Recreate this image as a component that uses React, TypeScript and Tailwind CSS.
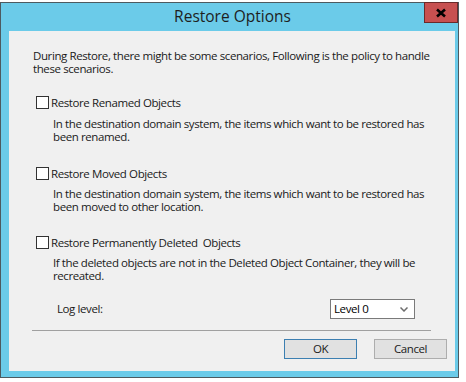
import React from "react";

function Check({ label }: { label: string }) {
  return (
    <div className="flex items-center h-[13px] ml-[27px]">
      <div className="w-[13px] h-[13px] border border-[#333333] bg-white shrink-0" />
      <span className="ml-[2px] leading-[13px] whitespace-pre">{label}</span>
    </div>
  );
}

function Desc({ l1, l2, mt }: { l1: string; l2: string; mt: string }) {
  return (
    <div className={`ml-[44px] leading-[13px] whitespace-nowrap ${mt}`}>
      {l1}
      <br />
      {l2}
    </div>
  );
}

export default function App() {
  return (
    <div
      className="w-[466px] h-[382px] bg-white overflow-hidden"
      style={{ fontFamily: '"Open Sans", "Noto Sans", sans-serif' }}
    >
      <div className="mt-[2px] w-[459px] h-[376px] bg-[#6bcbe9] border border-[#4d5a60] flex flex-col relative">
        <div className="h-[28px] flex items-center justify-center pl-[6px] text-[15.5px] text-[#1e1e1e]">
          Restore Options
        </div>
        <div className="absolute top-[-1px] right-0 w-[34px] h-[21px] bg-[#c75050] border border-[#6b2a2a] flex items-center justify-center">
          <svg width="12" height="10" viewBox="0 0 12 10">
            <path d="M2 1.5 L10 8.5 M10 1.5 L2 8.5" stroke="#000" strokeWidth="2.6" />
          </svg>
        </div>
        <div className="ml-[8px] mr-[3px] h-[340px] bg-[#f0f0f0] text-[11.5px] tracking-[-0.4px] text-[#1a1a1a] flex flex-col">
          <div className="ml-[24px] mt-[18px] leading-[13px] whitespace-nowrap">
            During Restore, there might be some scenarios, Following is the policy to handle
            <br />
            these scenarios.
          </div>
          <div className="mt-[21px]">
            <Check label="Restore Renamed Objects" />
          </div>
          <Desc
            mt="mt-[8px]"
            l1="In the destination domain system, the items which want to be restored has"
            l2="been renamed."
          />
          <div className="mt-[24px]">
            <Check label="Restore Moved Objects" />
          </div>
          <Desc
            mt="mt-[7px]"
            l1="In the destination domain system, the items which want to be restored has"
            l2="been moved to other location."
          />
          <div className="mt-[23px]">
            <Check label="Restore Permanently Deleted  Objects" />
          </div>
          <Desc
            mt="mt-[7px]"
            l1="If the deleted objects are not in the Deleted Object Container, they will be"
            l2="recreated."
          />
          <div className="mt-[17px] flex items-center h-[20px]">
            <span className="ml-[48px]">Log level:</span>
            <div className="ml-auto mr-[40px] w-[85px] h-[20px] border border-[#7a7a7a] bg-white flex items-center pl-[3px] pr-[6px]">
              <span className="text-[#000]">Level 0</span>
              <svg className="ml-auto" width="8" height="5" viewBox="0 0 8 5">
                <path d="M0.5 0.5 L4 4 L7.5 0.5" stroke="#6d6d6d" strokeWidth="1.5" fill="none" />
              </svg>
            </div>
          </div>
          <div className="mt-[11px] ml-[23px] mr-[24px] h-px bg-[#a0a0a0]" />
          <div className="mt-[8px] flex justify-end gap-[17px] mr-[8px]">
            <div className="w-[73px] h-[20px] bg-[#e1e1e1] border border-[#3c7fb1] flex items-center justify-center">OK</div>
            <div className="w-[73px] h-[20px] bg-[#e1e1e1] border border-[#adadad] flex items-center justify-center">Cancel</div>
          </div>
        </div>
      </div>
    </div>
  );
}
